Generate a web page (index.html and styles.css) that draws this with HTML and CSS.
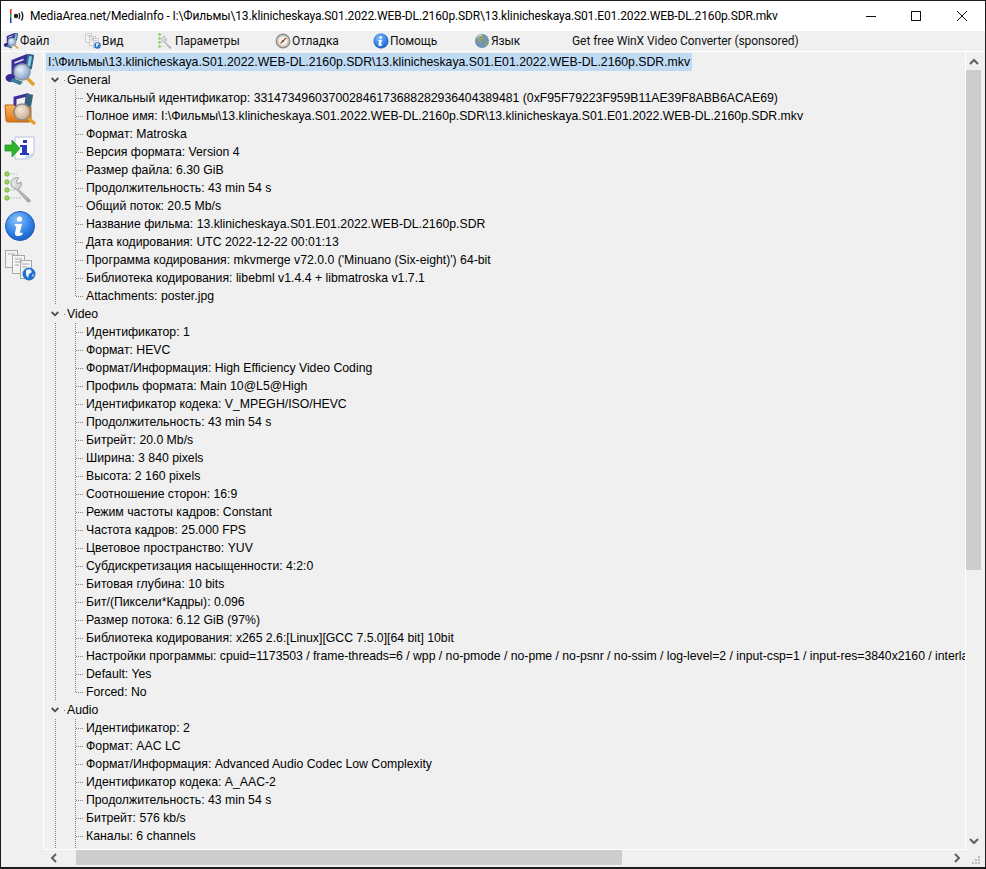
FILE: index.html
```html
<!DOCTYPE html>
<html lang="ru">
<head>
<meta charset="utf-8">
<title>MediaInfo</title>
<link rel="stylesheet" href="styles.css">
</head>
<body>
<svg class="defs" width="0" height="0" aria-hidden="true">
  <defs>
    <linearGradient id="gOrange" x1="0" y1="0" x2="0" y2="1"><stop offset="0" stop-color="#f9b45a"/><stop offset="1" stop-color="#dd7416"/></linearGradient>
    <linearGradient id="gWrench" x1="0" y1="0" x2="1" y2="1"><stop offset="0" stop-color="#efefef"/><stop offset="1" stop-color="#a8a8a8"/></linearGradient>
    <radialGradient id="gBlue" cx=".4" cy=".3" r=".8"><stop offset="0" stop-color="#8cc4fa"/><stop offset=".6" stop-color="#2f80e6"/><stop offset="1" stop-color="#1a55b8"/></radialGradient>
    <radialGradient id="gLens" cx=".4" cy=".35" r=".7"><stop offset="0" stop-color="#e8f0f8"/><stop offset="1" stop-color="#7d9cc4"/></radialGradient>
    <radialGradient id="gLensWarm" cx=".4" cy=".35" r=".7"><stop offset="0" stop-color="#f4e8dc"/><stop offset="1" stop-color="#c8a888"/></radialGradient>
    <symbol id="i-file" viewBox="0 0 32 32">
      <path d="M9 24V7l13-5v5L9 12" fill="none" stroke="#3b2f9e" stroke-width="3"/>
      <path d="M21 3v15" stroke="#3b2f9e" stroke-width="3"/>
      <ellipse cx="6.500" cy="24" rx="5" ry="4" fill="#372a94"/>
      <rect x="22" y="0" width="7" height="15" rx="1" fill="#37637f" transform="rotate(10 25 8)"/>
      <rect x="24" y="2" width="3" height="10" fill="#7ed0e8" transform="rotate(10 25 8)"/>
      <path d="M6 27l10 4 3-3-10-4z" fill="#3c7a96"/>
      <line x1="23" y1="24" x2="29" y2="30" stroke="#e2a030" stroke-width="3.500" stroke-linecap="round"/>
      <circle cx="18" cy="18" r="8" fill="url(#gLens)" stroke="#8a95a8" stroke-width="1.500"/>
    </symbol>
    <symbol id="i-open" viewBox="0 0 32 32">
      <path d="M11 14V5l12-3v12" fill="none" stroke="#3b2f9e" stroke-width="3"/>
      <rect x="21" y="1" width="7" height="13" fill="#37637f" transform="rotate(10 24 8)"/>
      <path d="M1 12h9l2 2h15v13q0 2-2 2H4q-2 0-2-2z" fill="url(#gOrange)" stroke="#b8651a" stroke-width="1"/>
      <line x1="24" y1="25" x2="30" y2="30" stroke="#e2a030" stroke-width="3.500" stroke-linecap="round"/>
      <circle cx="18" cy="19" r="8" fill="url(#gLensWarm)" stroke="#8a8a88" stroke-width="1.500"/>
    </symbol>
    <symbol id="i-export" viewBox="0 0 32 32">
      <path d="M11 5h19v15q-1 7-9 7H11z" fill="#fff" stroke="#b4c4e4" stroke-width="1"/>
      <path d="M20 27q9 0 10-7-3 3-8 3z" fill="#cfdbf2"/>
      <path d="M19 8h4v3h-4zM16 13h7v8h2v2h-9v-2h2v-6h-2z" fill="#2a37b8"/>
      <path d="M1 13h7V8l8 8.500-8 8.500v-6H1z" fill="#2fb52a" stroke="#1d8a1a" stroke-width=".7"/>
    </symbol>
    <symbol id="i-prefs" viewBox="0 0 32 32">
      <path d="M7 12a6 6 0 0 1 8-5l-3 3 2 3 3-2a6 6 0 0 1-3 7l12 11q1 2-2 2L12 18a6 6 0 0 1-5-6z" fill="url(#gWrench)" stroke="#9a9a9a" stroke-width="1"/>
      <g fill="#9ad65c" stroke="#5fa82c" stroke-width=".7">
        <circle cx="3" cy="3" r="2.200"/><circle cx="3" cy="11" r="2.200"/><circle cx="3" cy="19" r="2.200"/><circle cx="3" cy="27" r="2.200"/>
      </g>
      <g stroke="#cfcfcf" stroke-width="1.400" stroke-dasharray="2 1"><line x1="6" y1="3" x2="13" y2="3"/><line x1="6" y1="11" x2="8" y2="11"/><line x1="6" y1="19" x2="12" y2="19"/><line x1="6" y1="27" x2="18" y2="27"/></g>
    </symbol>
    <symbol id="i-info" viewBox="0 0 32 32">
      <circle cx="16" cy="16" r="14.500" fill="url(#gBlue)" stroke="#1c5cc0" stroke-width="1"/>
      <circle cx="15.500" cy="9" r="2.600" fill="#fff"/>
      <path d="M11 14h7l-2 8q0 1.500 2.500.5v2q-3 2-6 1.500-2-1-1.500-3l1.500-7h-2z" fill="#fff"/>
    </symbol>
    <symbol id="i-sheets" viewBox="0 0 32 32">
      <g fill="#f4f4f4" stroke="#a8a8a8" stroke-width="1">
        <rect x="1.500" y="1.500" width="12" height="17"/><rect x="8.500" y="6.500" width="12" height="18"/><rect x="16.500" y="11.500" width="11" height="18"/>
      </g>
      <g stroke="#a8a8a8" stroke-width="1"><line x1="4" y1="5" x2="11" y2="5"/><line x1="11" y1="10" x2="18" y2="10"/><line x1="11" y1="13" x2="18" y2="13"/><line x1="11" y1="16" x2="15" y2="16"/><line x1="18" y1="15" x2="25" y2="15"/><line x1="18" y1="18" x2="23" y2="18"/></g>
      <circle cx="25" cy="25" r="6.500" fill="#2272cc"/>
      <path d="M22 21l4-1 2 3-3 2-1 4-2-3zM28 26l2-1-1 3z" fill="#eaf3fc"/>
    </symbol>
    <symbol id="i-gauge" viewBox="0 0 16 16">
      <circle cx="8" cy="8" r="6.800" fill="#c8c6c0" stroke="#8a8880" stroke-width="1.200"/>
      <circle cx="8" cy="8" r="4.500" fill="#f4f2ec"/>
      <path d="M5.500 10.500L11 5" stroke="#c8402c" stroke-width="1.200"/>
      <circle cx="8" cy="8" r="1" fill="#55534e"/>
    </symbol>
    <symbol id="i-globe" viewBox="0 0 16 16">
      <circle cx="8" cy="8" r="7" fill="#6e94b8"/>
      <path d="M4 3l5-1 2 3-3 2-1 4-3-2zM11 9l3-1-1 4-3 1z" fill="#8fa068"/>
      <path d="M3 5a6 6 0 0 1 5-3" stroke="#dfe8f0" stroke-width="1" fill="none"/>
    </symbol>
  </defs>
</svg>

<div class="window">
  <header class="titlebar">
    <svg class="app-icon" viewBox="0 0 16 16" aria-hidden="true">
      <rect x="1" y="1" width="1.500" height="5" fill="#d22"/><rect x="1" y="6" width="1.500" height="4" fill="#2a2"/><rect x="1" y="10" width="1.500" height="5" fill="#23c"/>
      <circle cx="7" cy="8" r="2.200" fill="#222"/>
      <path d="M10 5q1.500 3 0 6M12.500 3.500q2.500 4.500 0 9" fill="none" stroke="#222" stroke-width="1.400"/>
    </svg>
    <span class="title-text">MediaArea.net/MediaInfo - I:\Фильмы\13.klinicheskaya.S01.2022.WEB-DL.2160p.SDR\13.klinicheskaya.S01.E01.2022.WEB-DL.2160p.SDR.mkv</span>
    <div class="caption">
      <svg class="cap" viewBox="0 0 46 31" aria-hidden="true"><line x1="19" y1="15.500" x2="29" y2="15.500" stroke="#111"/></svg>
      <svg class="cap" viewBox="0 0 46 31" aria-hidden="true"><rect x="18.500" y="10.500" width="9" height="9" fill="none" stroke="#111"/></svg>
      <svg class="cap" viewBox="0 0 46 31" aria-hidden="true"><path d="M18 10l10 10M28 10L18 20" fill="none" stroke="#111"/></svg>
    </div>
  </header>

  <nav class="menubar">
    <span class="menu menu-file"><svg class="mi"><use href="#i-file"/></svg>Файл</span>
    <span class="menu menu-view"><svg class="mi"><use href="#i-sheets"/></svg>Вид</span>
    <span class="menu menu-prefs"><svg class="mi"><use href="#i-prefs"/></svg>Параметры</span>
    <span class="menu menu-debug"><svg class="mi"><use href="#i-gauge"/></svg>Отладка</span>
    <span class="menu menu-help"><svg class="mi"><use href="#i-info"/></svg>Помощь</span>
    <span class="menu menu-lang"><svg class="mi"><use href="#i-globe"/></svg>Язык</span>
    <span class="menu">Get free WinX Video Converter (sponsored)</span>
  </nav>

  <div class="body">
    <aside class="toolbar">
      <svg class="ti"><use href="#i-file"/></svg>
      <svg class="ti"><use href="#i-open"/></svg>
      <svg class="ti"><use href="#i-export"/></svg>
      <svg class="ti"><use href="#i-prefs"/></svg>
      <svg class="ti"><use href="#i-info"/></svg>
      <svg class="ti"><use href="#i-sheets"/></svg>
    </aside>
    <div class="content">
      <div class="main">
        <div class="tree">
          <div class="root"><span class="selected">I:\Фильмы\13.klinicheskaya.S01.2022.WEB-DL.2160p.SDR\13.klinicheskaya.S01.E01.2022.WEB-DL.2160p.SDR.mkv</span></div>
          <div class="node"><svg class="chev" viewBox="0 0 8 6" aria-hidden="true"><path d="M.7 1L4 4.300 7.300 1" fill="none" stroke="#4a4a4a" stroke-width="1.800"/></svg><i class="dot"></i>General</div>
          <ul class="leaves">
            <li>Уникальный идентификатор: 331473496037002846173688282936404389481 (0xF95F79223F959B11AE39F8ABB6ACAE69)</li>
            <li>Полное имя: I:\Фильмы\13.klinicheskaya.S01.2022.WEB-DL.2160p.SDR\13.klinicheskaya.S01.E01.2022.WEB-DL.2160p.SDR.mkv</li>
            <li>Формат: Matroska</li>
            <li>Версия формата: Version 4</li>
            <li>Размер файла: 6.30 GiB</li>
            <li>Продолжительность: 43 min 54 s</li>
            <li>Общий поток: 20.5 Mb/s</li>
            <li>Название фильма: 13.klinicheskaya.S01.E01.2022.WEB-DL.2160p.SDR</li>
            <li>Дата кодирования: UTC 2022-12-22 00:01:13</li>
            <li>Программа кодирования: mkvmerge v72.0.0 ('Minuano (Six-eight)') 64-bit</li>
            <li>Библиотека кодирования: libebml v1.4.4 + libmatroska v1.7.1</li>
            <li>Attachments: poster.jpg</li>
          </ul>
          <div class="node"><svg class="chev" viewBox="0 0 8 6" aria-hidden="true"><path d="M.7 1L4 4.300 7.300 1" fill="none" stroke="#4a4a4a" stroke-width="1.800"/></svg><i class="dot"></i>Video</div>
          <ul class="leaves">
            <li>Идентификатор: 1</li>
            <li>Формат: HEVC</li>
            <li>Формат/Информация: High Efficiency Video Coding</li>
            <li>Профиль формата: Main 10@L5@High</li>
            <li>Идентификатор кодека: V_MPEGH/ISO/HEVC</li>
            <li>Продолжительность: 43 min 54 s</li>
            <li>Битрейт: 20.0 Mb/s</li>
            <li>Ширина: 3 840 pixels</li>
            <li>Высота: 2 160 pixels</li>
            <li>Соотношение сторон: 16:9</li>
            <li>Режим частоты кадров: Constant</li>
            <li>Частота кадров: 25.000 FPS</li>
            <li>Цветовое пространство: YUV</li>
            <li>Субдискретизация насыщенности: 4:2:0</li>
            <li>Битовая глубина: 10 bits</li>
            <li>Бит/(Пиксели*Кадры): 0.096</li>
            <li>Размер потока: 6.12 GiB (97%)</li>
            <li>Библиотека кодирования: x265 2.6:[Linux][GCC 7.5.0][64 bit] 10bit</li>
            <li class="long">Настройки программы: cpuid=1173503 / frame-threads=6 / wpp / no-pmode / no-pme / no-psnr / no-ssim / log-level=2 / input-csp=1 / input-res=3840x2160 / interlace=0</li>
            <li>Default: Yes</li>
            <li>Forced: No</li>
          </ul>
          <div class="node"><svg class="chev" viewBox="0 0 8 6" aria-hidden="true"><path d="M.7 1L4 4.300 7.300 1" fill="none" stroke="#4a4a4a" stroke-width="1.800"/></svg><i class="dot"></i>Audio</div>
          <ul class="leaves">
            <li>Идентификатор: 2</li>
            <li>Формат: AAC LC</li>
            <li>Формат/Информация: Advanced Audio Codec Low Complexity</li>
            <li>Идентификатор кодека: A_AAC-2</li>
            <li>Продолжительность: 43 min 54 s</li>
            <li>Битрейт: 576 kb/s</li>
            <li>Каналы: 6 channels</li>
            <li class="stub"></li>
          </ul>
        </div>
        <div class="vscroll">
          <svg class="arrow" viewBox="0 0 16 18" aria-hidden="true"><path d="M4 12l4-4 4 4" fill="none" stroke="#606060" stroke-width="2"/></svg>
          <div class="vtrack"><div class="vthumb"></div></div>
          <svg class="arrow" viewBox="0 0 16 18" aria-hidden="true"><path d="M4 7l4 4 4-4" fill="none" stroke="#606060" stroke-width="2"/></svg>
        </div>
      </div>
      <div class="hrow">
        <div class="hscroll">
          <svg class="arrow-h" viewBox="0 0 17 16" aria-hidden="true"><path d="M11 4L7 8l4 4" fill="none" stroke="#606060" stroke-width="2"/></svg>
          <div class="htrack"><div class="hthumb"></div></div>
          <svg class="arrow-h" viewBox="0 0 17 16" aria-hidden="true"><path d="M6 4l4 4-4 4" fill="none" stroke="#606060" stroke-width="2"/></svg>
        </div>
        <svg class="grip" viewBox="0 0 19 17" aria-hidden="true"><path d="M12 6h2v2h-2zM9 9h2v2H9zM12 9h2v2h-2zM6 12h2v2H6zM9 12h2v2H9zM12 12h2v2h-2z" fill="#bcbcbc"/></svg>
      </div>
    </div>
  </div>
</div>
</body>
</html>
```
FILE: styles.css
```css
* { box-sizing: border-box; }
html, body { margin: 0; padding: 0; }
body {
  width: 986px;
  height: 869px;
  overflow: hidden;
  background: #1d1d1f;
  font-family: "Liberation Sans", Arial, sans-serif;
  font-size: 12px;
  color: #000;
}
.defs { position: absolute; }
.window {
  width: 984px;
  height: 866px;
  margin: 1px 0 0 1px;
  background: #f0f0f0;
  display: flex;
  flex-direction: column;
}
.titlebar {
  height: 30px;
  background: #fff;
  display: flex;
  align-items: center;
  padding-left: 8px;
  flex: none;
}
.app-icon { width: 16px; height: 16px; margin-right: 5px; flex: none; }
.title-text { font-family: Roboto, "Liberation Sans", sans-serif; font-size: 12px; letter-spacing: -0.13px; color: #000; white-space: nowrap; flex: 1; min-width: 0; overflow: hidden; }
.caption { display: flex; flex: none; }
.cap { width: 46px; height: 31px; }
.menubar {
  height: 21px;
  flex: none;
  display: flex;
  align-items: center;
  padding-left: 2px;
  background: #f0f0f0;
  border-bottom: 1px solid #fff;
  font-family: Roboto, "Liberation Sans", sans-serif;
  letter-spacing: -0.07px;
  color: #111;
}
.menu { display: flex; align-items: center; white-space: nowrap; }
.mi { width: 16px; height: 16px; margin-right: 1px; flex: none; }
.menu-file { width: 82px; }
.menu-view { width: 73px; }
.menu-prefs { width: 117px; }
.menu-debug { width: 98px; }
.menu-help { width: 101px; }
.menu-lang { width: 98px; }
.body { flex: 1; display: flex; min-height: 0; }
.toolbar {
  width: 42px;
  flex: none;
  display: flex;
  flex-direction: column;
  align-items: center;
  padding: 2px 4px 0 0;
  gap: 7px;
}
.ti { width: 32px; height: 32px; flex: none; }
.content { flex: 1; display: flex; flex-direction: column; min-width: 0; }
.main { flex: 1; display: flex; min-height: 0; padding-right: 3px; }
.tree {
  flex: 1;
  min-width: 0;
  overflow: hidden;
  background-color: #f0f0f0;
  border-left: 1px solid #fff;
  border-right: 1px solid #fff;
  border-bottom: 1px solid #fff;
  padding-left: 2px;
  padding-top: 1px;
  white-space: nowrap;
  font-size: 12.25px;
  line-height: 18px;
}
.root { height: 18px; }
.selected { display: block; width: max-content; background: #bfdaf3; padding: 0 2px 0 2px; height: 18px; }
.node { height: 18px; display: flex; align-items: center; padding-left: 5px; }
.chev { width: 8px; height: 6px; margin-right: 5px; flex: none; }
.dot { width: 1px; height: 1px; margin-right: 2px; flex: none; background: #777; }
.leaves {
  list-style: none;
  margin: 0 0 0 9px;
  padding: 0 0 0 20px;
  background:
    repeating-linear-gradient(180deg, #808080 0 1px, transparent 1px 2px) 0 0 / 1px 100% no-repeat,
    repeating-linear-gradient(180deg, #808080 0 1px, transparent 1px 2px) 20px 0 / 1px calc(100% - 9px) no-repeat;
}
.leaves li {
  height: 18px;
  padding-left: 11px;
  background: repeating-linear-gradient(90deg, #808080 0 1px, transparent 1px 2px) 1px 9px / 8px 1px no-repeat;
}
.leaves .stub { background: none; }
.leaves .long { letter-spacing: -0.02px; }
.vscroll { width: 16px; flex: none; display: flex; flex-direction: column; }
.arrow { width: 16px; height: 18px; flex: none; }
.vtrack { flex: 1; }
.vthumb { width: 15px; height: 500px; background: #cdcdcd; }
.hrow { height: 17px; flex: none; display: flex; }
.hscroll { flex: 1; display: flex; padding-left: 2px; min-width: 0; }
.arrow-h { width: 17px; height: 16px; flex: none; }
.htrack { flex: 1; padding-left: 14px; }
.hthumb { width: 546px; height: 15px; background: #cdcdcd; }
.grip { width: 19px; height: 17px; flex: none; }
```
